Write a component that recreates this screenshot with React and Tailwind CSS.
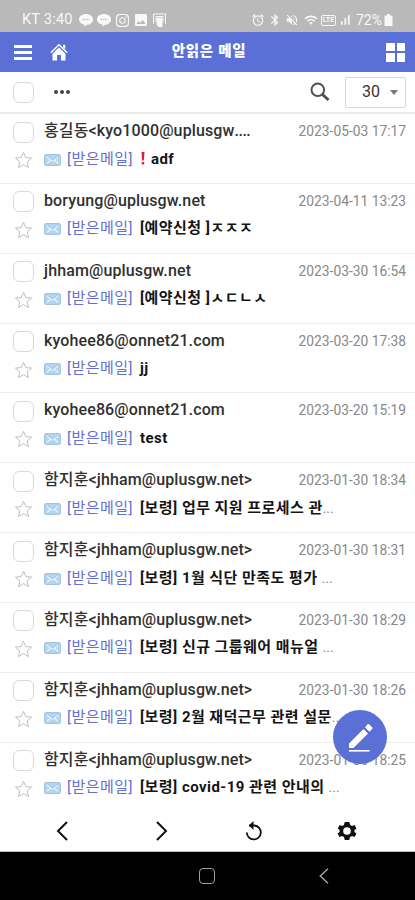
import React from "react";
import { MdAlarm, MdBluetooth, MdVolumeOff, MdWifi, MdImage, MdSignalCellularAlt } from "react-icons/md";
import { FaInstagram } from "react-icons/fa";

const mails = [
  { from: "홍길동<kyo1000@uplusgw", cut: true, date: "2023-05-03 17:17", subject: "adf", urgent: true },
  { from: "boryung@uplusgw.net", date: "2023-04-11 13:23", subject: "[예약신청 ]ㅈㅈㅈ" },
  { from: "jhham@uplusgw.net", date: "2023-03-30 16:54", subject: "[예약신청 ]ㅅㄷㄴㅅ" },
  { from: "kyohee86@onnet21.com", date: "2023-03-20 17:38", subject: "jj" },
  { from: "kyohee86@onnet21.com", date: "2023-03-20 15:19", subject: "test" },
  { from: "함지훈<jhham@uplusgw.net>", date: "2023-01-30 18:34", subject: "[보령] 업무 지원 프로세스 관", more: true },
  { from: "함지훈<jhham@uplusgw.net>", date: "2023-01-30 18:31", subject: "[보령] 1월 식단 만족도 평가 ", more: true },
  { from: "함지훈<jhham@uplusgw.net>", date: "2023-01-30 18:29", subject: "[보령] 신규 그룹웨어 매뉴얼 ", more: true },
  { from: "함지훈<jhham@uplusgw.net>", date: "2023-01-30 18:26", subject: "[보령] 2월 재덕근무 관련 설문", more: true },
  { from: "함지훈<jhham@uplusgw.net>", date: "2023-01-30 18:25", subject: "[보령] covid-19 관련 안내의 ", more: true },
];

function Checkbox() {
  return <span className="block h-[21px] w-[21px] shrink-0 rounded-[6px] border border-[#d9d9d9] bg-white" />;
}

function Star() {
  return (
    <svg className="h-[18px] w-[19px] shrink-0" viewBox="0 0 19 18" fill="none" stroke="#bfbfbf" strokeWidth="1">
      <path d="M9.5 1.300l2.300 5.300 5.800.5-4.400 3.800 1.300 5.700-5-3-5 3 1.300-5.700L1.400 7.100l5.800-.5z" />
    </svg>
  );
}

function Envelope() {
  return (
    <svg className="h-[12px] w-[17px] shrink-0" viewBox="0 0 17 13" preserveAspectRatio="none" fill="none">
      <rect x="0.6" y="0.6" width="15.8" height="11.8" rx="1.5" fill="#b4d5f0" stroke="#9dc0df" />
      <path d="M3 3.200l5.500 4.500L14 3.200M3 10.200l3.700-3.700M14 10.200l-3.700-3.700" stroke="#e9f5ff" strokeWidth="1.2" />
      <path d="M3.500 2.400l5 4.100 5-4.100" stroke="#8db4d6" strokeWidth=".6" />
    </svg>
  );
}

function MailRow({ mail }) {
  return (
    <li className="h-[69.85px] border-b border-[#eeeeee] pl-[13px] pr-[9px] pt-[6px]">
      <div className="flex h-[22px] items-center">
        <span className="mt-[2px]"><Checkbox /></span>
        <span className="ml-[10px] whitespace-pre text-[16px] font-medium leading-[22px] tracking-[0.12px] text-[#303030]">
          {mail.from}
          {mail.cut && <span className="tracking-[-0.5px]">....</span>}
        </span>
        <span className="ml-auto whitespace-pre text-[13.8px] leading-[22px] text-[#888888]">{mail.date}</span>
      </div>
      <div className="mt-[5px] flex h-[23px] items-center">
        <span className="ml-[1px] mt-[3px]"><Star /></span>
        <span className="ml-[11px] mt-[2px]"><Envelope /></span>
        <span className="ml-[6px] w-[67px] whitespace-pre text-[15px] leading-[22px] tracking-[0.45px] text-[#6270cf]">[받은메일]</span>
        {mail.urgent && (
          <svg className="ml-[7px] h-[13px] w-[4px]" viewBox="0 0 4 13" fill="#e51b2b">
            <path d="M.5 0h3L2.800 8.500H1.200zM.8 10h2.400v2.500H.8z" />
          </svg>
        )}
        <span className="ml-[6px] whitespace-pre text-[15px] font-bold leading-[22px] tracking-[0.45px] text-[#151515]">{mail.subject}</span>
        {mail.more && <span className="text-[14px] leading-[22px] text-[#888888]">...</span>}
      </div>
    </li>
  );
}

function StatusBar() {
  return (
    <div className="flex h-8 items-center bg-[#b9b9b9] pl-[22px] pr-[22px] pt-[8px] text-[14.5px] text-[#f8f8f8]">
      <span className="w-[53px] whitespace-pre tracking-[0.25px]">KT 3:40</span>
      <svg className="ml-[4px] h-[14px] w-[33px]" viewBox="0 0 33 14" fill="#f8f8f8">
        <path d="M7 1c4 0 7 2.300 7 5.400s-3 5.400-6 5.400L5 13.500l.3-2C2 11 0 9 0 6.400 0 3.300 3 1 7 1z" />
        <path d="M25 1c4 0 7 2.300 7 5.400s-3 5.400-6 5.400l-3 1.700.3-2c-3.300-.5-5.300-2.500-5.300-5.100C18 3.300 21 1 25 1z" />
        <path d="M3.500 6.500h7M21.500 6.500h7" stroke="#c4c4c4" strokeWidth="1.500" strokeDasharray="1.500 .8" />
      </svg>
      <FaInstagram className="ml-[3px] h-[15px] w-[15px]" />
      <MdImage className="ml-[3px] h-[16px] w-[16px]" />
      <svg className="ml-[3px] h-[15px] w-[15px]" viewBox="0 0 15 15" fill="none" stroke="#f8f8f8">
        <path d="M1.500 11V1h12v10M4 9V3.500h7V9" />
        <path d="M5 5h5v8.500H6.500L5 11z" fill="#f8f8f8" />
      </svg>
      <MdAlarm className="ml-auto h-[14px] w-[14px]" />
      <MdBluetooth className="ml-[3px] h-[14px] w-[14px]" />
      <MdVolumeOff className="ml-[3px] h-[14px] w-[14px]" />
      <MdWifi className="ml-[5px] h-[14px] w-[14px]" />
      <span className="ml-[3px] flex h-[11px] w-[15px] items-center justify-center rounded-[2px] border border-[#f8f8f8] text-[7px] font-bold leading-none">LTE</span>
      <MdSignalCellularAlt className="ml-[2px] h-[14px] w-[14px]" />
      <span className="ml-[4px] text-[14px]">72%</span>
      <svg className="ml-[2px] h-[12px] w-[9px]" viewBox="0 0 8 12" fill="#f8f8f8"><path d="M2.500 0h3v1.500H8V12H0V1.500h2.500z" /></svg>
    </div>
  );
}

function Header() {
  return (
    <header className="grid h-10 grid-cols-[1fr_auto_1fr] items-center bg-[#5a70d6] pl-[13px] pr-[10px]">
      <div className="flex items-center pl-px">
        <div className="flex w-[18px] flex-col gap-[3px]">
          <span className="h-[3px] bg-white" />
          <span className="h-[3px] bg-white" />
          <span className="h-[3px] bg-white" />
        </div>
        <svg className="ml-[18px] h-[18px] w-[18px]" viewBox="0 0 18 18" fill="white">
          <path d="M9 4.600L15.500 10.700V17.500H11V12H7v5.500H2.500v-6.800z" />
          <path d="M.8 9.800L9 1.800l8.200 8" fill="none" stroke="white" strokeWidth="1.500" />
          <path d="M13 1.800h2.200v4.500L13 4.200z" />
        </svg>
      </div>
      <h1 className="whitespace-pre text-[14.5px] font-black leading-5 tracking-[0.7px] text-white">안읽은 메일</h1>
      <div className="grid w-[19px] grid-cols-2 gap-[2px] justify-self-end">
        <span className="h-[8.5px] bg-white" />
        <span className="h-[8.5px] bg-white" />
        <span className="h-[8.5px] bg-white" />
        <span className="h-[8.5px] bg-white" />
      </div>
    </header>
  );
}

function Toolbar() {
  return (
    <div className="flex h-[42px] items-center border-b-2 border-[#e9e9e9] pl-[13px] pr-[9px]">
      <Checkbox />
      <div className="ml-[20px] flex gap-[2px]">
        <span className="h-[4px] w-[4px] rounded-full bg-[#444]" />
        <span className="h-[4px] w-[4px] rounded-full bg-[#444]" />
        <span className="h-[4px] w-[4px] rounded-full bg-[#444]" />
      </div>
      <svg className="ml-auto h-[20px] w-[20px]" viewBox="0 0 20 20" fill="none" stroke="#505050">
        <circle cx="7.800" cy="7.800" r="6.300" strokeWidth="2" />
        <path d="M12.500 12.500l6 5.500" strokeWidth="3" />
      </svg>
      <div className="ml-[15px] flex h-[31px] w-[61px] items-center rounded-[2px] border border-[#d8d8d8] pl-[16px]">
        <span className="text-[16px] text-[#333]">30</span>
        <span className="ml-[10px] h-0 w-0 border-x-[4.5px] border-t-[5px] border-x-transparent border-t-[#777]" />
      </div>
    </div>
  );
}

function BottomBar() {
  return (
    <div className="grid h-[41px] grid-cols-[124px_75px_110px_76px] items-center justify-items-center border-b border-[#bbb] bg-white">
      <svg className="h-[20px] w-[12px]" viewBox="0 0 12 20" fill="none" stroke="#111" strokeWidth="2"><path d="M11 1L2 10l9 9" /></svg>
      <svg className="h-[20px] w-[12px]" viewBox="0 0 12 20" fill="none" stroke="#111" strokeWidth="2"><path d="M1 1l9 9-9 9" /></svg>
      <svg className="h-[20px] w-[18px]" viewBox="0 0 18 20" fill="none" stroke="#111" strokeWidth="1.8">
        <path d="M4 4.500h5.500a7 7 0 1 1-7.700 7" />
        <path d="M8.500 0v9L3.800 4.500z" fill="#111" stroke="none" />
      </svg>
      <svg className="h-[24px] w-[24px]" viewBox="0 0 24 24" fill="#111">
        <path fillRule="evenodd" d="M19.400 13c.1-.7.1-1.300 0-2l2.100-1.600-2-3.500-2.500 1a7 7 0 0 0-1.700-1L14.200 3H9.800l-.9 2.900a7 7 0 0 0-1.700 1l-2.500-1-2 3.500L4.600 11c-.1.700-.1 1.300 0 2l-2.100 1.600 2 3.500 2.500-1a7 7 0 0 0 1.900 1l.9 2.900h4.400l.9-2.900a7 7 0 0 0 1.900-1l2.500 1 2-3.500zM12 15.800a3.800 3.800 0 1 1 0-7.600 3.800 3.800 0 0 1 0 7.600z" />
      </svg>
    </div>
  );
}

function SystemNav() {
  return (
    <div className="flex h-12 items-center bg-black pl-[199px]">
      <span className="h-[16px] w-[16px] rounded-[4px] border-[1.5px] border-[#a0a0a0]" />
      <svg className="ml-[104px] h-[16px] w-[10px]" viewBox="0 0 10 16" fill="none" stroke="#a0a0a0" strokeWidth="1.5"><path d="M9 .7L1.300 8 9 15.300" /></svg>
    </div>
  );
}

export default function App() {
  return (
    <main className="relative flex h-[900px] w-[415px] flex-col overflow-hidden bg-white font-[Roboto,'Noto_Sans_CJK_KR',sans-serif]">
      <StatusBar />
      <Header />
      <Toolbar />
      <ul className="h-[697px] shrink-0">
        {mails.map((mail, i) => <MailRow key={i} mail={mail} />)}
      </ul>
      <BottomBar />
      <SystemNav />
      <button className="absolute left-[333px] top-[710px] flex h-[54px] w-[54px] items-center justify-center rounded-full bg-[#5a70d6]">
        <svg className="h-[29px] w-[25px]" viewBox="0 0 25 29" fill="white">
          <path d="M1 20.500L15.500 6l4.500 4.500L5.500 25H1zM17 4.500l2.300-3c.6-.7 1.200-.7 1.800-.2l3 3c.6.600.6 1.200 0 1.800L21.500 8.700z" />
          <path d="M1 27h20.500v1.600H1z" />
        </svg>
      </button>
    </main>
  );
}
